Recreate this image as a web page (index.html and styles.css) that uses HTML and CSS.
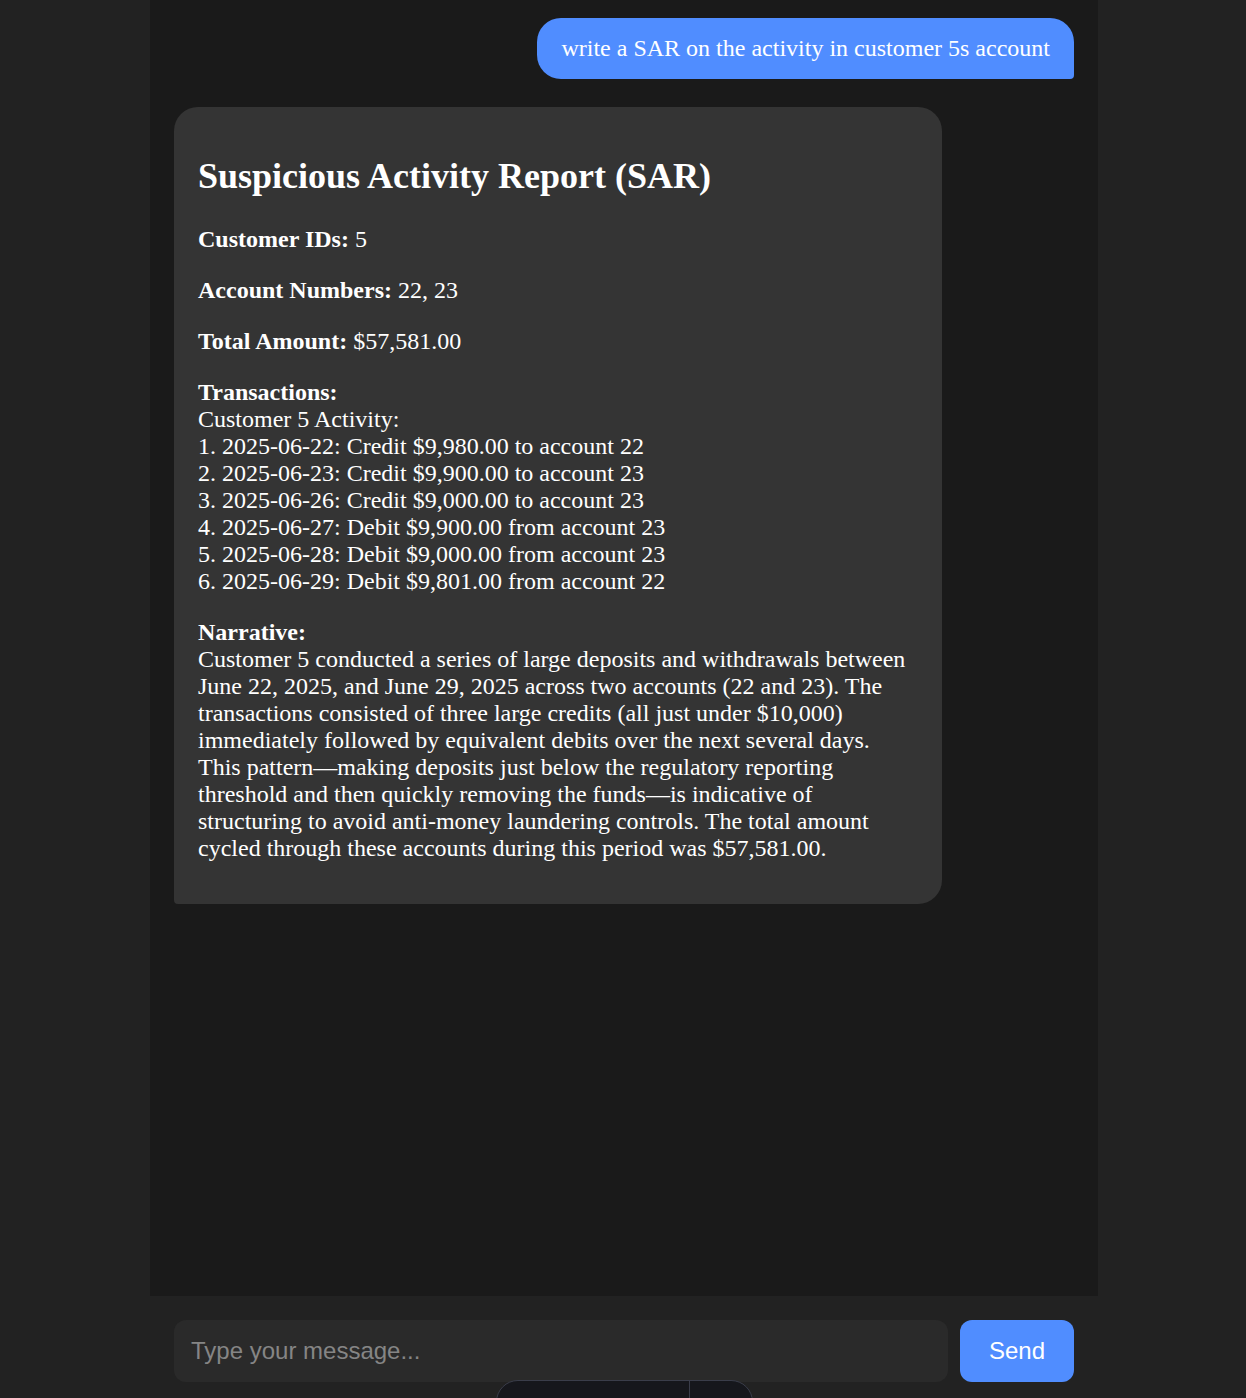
FILE: index.html
```html
<!DOCTYPE html>
<html lang="en">
<head>
<meta charset="utf-8">
<title>SAR Chat</title>
<link rel="stylesheet" href="styles.css">
</head>
<body>
<main class="chat">
  <div class="msg msg-user">write a SAR on the activity in customer 5s account</div>
  <div class="msg msg-bot">
    <h2 class="report-title">Suspicious Activity Report (SAR)</h2>
    <p><strong>Customer IDs:</strong> 5</p>
    <p><strong>Account Numbers:</strong> 22, 23</p>
    <p><strong>Total Amount:</strong> $57,581.00</p>
    <p><strong>Transactions:</strong><br>Customer 5 Activity:<br>1. 2025-06-22: Credit $9,980.00 to account 22<br>2. 2025-06-23: Credit $9,900.00 to account 23<br>3. 2025-06-26: Credit $9,000.00 to account 23<br>4. 2025-06-27: Debit $9,900.00 from account 23<br>5. 2025-06-28: Debit $9,000.00 from account 23<br>6. 2025-06-29: Debit $9,801.00 from account 22</p>
    <p><strong>Narrative:</strong><br>Customer 5 conducted a series of large deposits and withdrawals between June 22, 2025, and June 29, 2025 across two accounts (22 and 23). The transactions consisted of three large credits (all just under $10,000) immediately followed by equivalent debits over the next several days. This pattern—making deposits just below the regulatory reporting threshold and then quickly removing the funds—is indicative of structuring to avoid anti-money laundering controls. The total amount cycled through these accounts during this period was $57,581.00.</p>
  </div>
</main>
<form class="composer">
  <input class="composer-input" type="text" placeholder="Type your message...">
  <button class="composer-send" type="button">Send</button>
</form>
<div class="dev-pill">
  <span class="dev-pill-main">Edit with tools</span>
  <span class="dev-pill-close">×</span>
</div>
</body>
</html>
```

FILE: styles.css
```css
html, body {
  margin: 0;
  padding: 0;
}
body {
  height: 100vh;
  box-sizing: border-box;
  padding-left: 2px;
  display: flex;
  flex-direction: column;
  background: #222222;
  font-family: "Liberation Serif", "Times New Roman", serif;
  color: #ffffff;
  overflow: hidden;
}
.chat {
  box-sizing: border-box;
  width: 948px;
  margin: 0 auto;
  flex: 1;
  min-height: 0;
  background: #1a1a1a;
  padding: 18px 24px;
  display: flex;
  flex-direction: column;
  gap: 28px;
  overflow: hidden;
}
.msg {
  font-size: 24px;
  line-height: normal;
  color: #ffffff;
}
.msg-user {
  align-self: flex-end;
  background: #508dff;
  padding: 17px 24px 17px;
  border-radius: 24px 24px 4px 24px;
}
.msg-bot {
  align-self: flex-start;
  background: #343434;
  padding: 18px 24px;
  max-width: 720px;
  border-radius: 24px 24px 24px 4px;
}
.report-title {
  font-size: 36px;
  font-weight: bold;
  margin: 30px 0 29px;
}
.msg-bot p {
  margin: 24px 0;
}
.composer {
  box-sizing: border-box;
  width: 948px;
  margin: 0 auto;
  padding: 24px 24px 16px;
  display: flex;
  gap: 12px;
  flex-shrink: 0;
}
.composer-input {
  flex: 1;
  height: 62px;
  box-sizing: border-box;
  background: #2a2a2a;
  border: none;
  border-radius: 12px;
  padding: 0 17px;
  font-family: "Liberation Sans", Arial, sans-serif;
  font-size: 24px;
  color: #ffffff;
  outline: none;
}
.composer-input::placeholder {
  color: #858585;
}
.composer-send {
  width: 114px;
  height: 62px;
  background: #508dff;
  border: none;
  border-radius: 12px;
  color: #ffffff;
  font-family: "Liberation Sans", Arial, sans-serif;
  font-size: 24px;
}
.dev-pill {
  position: fixed;
  left: 496px;
  top: 1380px;
  width: 257px;
  height: 44px;
  box-sizing: border-box;
  display: flex;
  background: #16171c;
  border: 1px solid #3a3d4a;
  border-radius: 24px;
  overflow: hidden;
  font-family: "Liberation Sans", Arial, sans-serif;
  font-size: 15px;
  color: #c8cad0;
}
.dev-pill-main {
  flex: 1;
  padding: 14px 0 0 28px;
  border-right: 1px solid #3a3d4a;
}
.dev-pill-close {
  width: 62px;
  text-align: center;
  padding-top: 12px;
  font-size: 18px;
}
```
